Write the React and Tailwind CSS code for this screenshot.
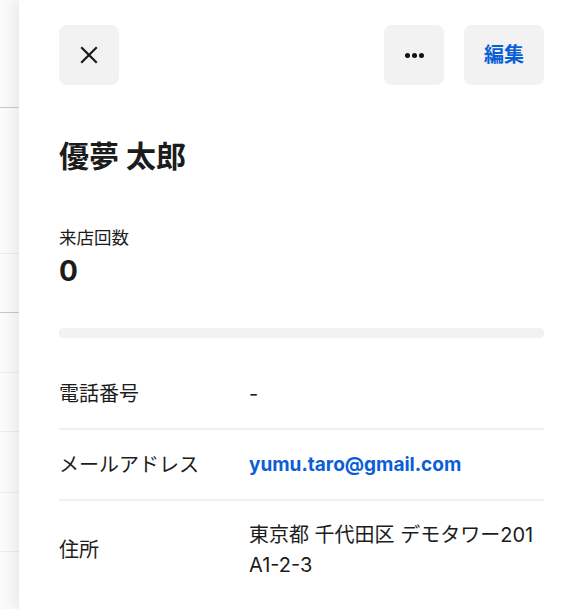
const FONT = { fontFamily: 'Inter, "Noto Sans CJK JP", sans-serif' };

// rows of the page behind the panel (only a sliver shows)
const BG_ROWS = [
  { h: 108, line: 'border-[#c9c9c9]' },
  { h: 146, line: 'border-[#ececec]' },
  { h: 59, line: 'border-[#c9c9c9]' },
  { h: 60, line: 'border-[#ececec]' },
  { h: 59, line: 'border-[#ececec]' },
  { h: 61, line: 'border-[#ececec]' },
  { h: 59, line: 'border-[#ececec]' },
];

function InfoRow({ label, children, last }) {
  return (
    <div className={`flex items-center py-[19px] ${last ? '' : 'border-b-2 border-[#f0f0f0]'}`}>
      <div className="w-[190px] shrink-0 text-[20px] leading-[30px] text-[#1c1c1c]">{label}</div>
      <div className="flex-1 text-[20px] leading-[30px] text-[#1c1c1c]">{children}</div>
    </div>
  );
}

export default function App() {
  return (
    <div className="flex w-[576px] h-[609px] overflow-hidden bg-white" style={FONT}>
      <div className="w-[19px] shrink-0 flex flex-col bg-[#fbfbfb]">
        {BG_ROWS.map((r, i) => (
          <div key={i} className={`shrink-0 border-b ${r.line}`} style={{ height: r.h }} />
        ))}
      </div>

      <div className="relative z-10 flex-1 bg-white pl-10 pr-8 pt-[25px] shadow-[-6px_0_14px_rgba(0,0,0,0.07)]">
        {/* Header buttons */}
        <div className="flex items-center justify-between">
          <button className="w-[60px] h-[60px] rounded-lg bg-[#f2f2f2] flex items-center justify-center">
            <svg width="18" height="18" viewBox="0 0 18 18" fill="none" stroke="#1a1a1a" strokeWidth="2.2" strokeLinecap="square">
              <path d="M2 2L16 16M16 2L2 16" />
            </svg>
          </button>
          <div className="flex items-center gap-5">
            <button className="w-[60px] h-[60px] rounded-lg bg-[#f2f2f2] flex items-center justify-center gap-[2px]">
              <span className="w-[5px] h-[5px] rounded-full bg-[#111]" />
              <span className="w-[5px] h-[5px] rounded-full bg-[#111]" />
              <span className="w-[5px] h-[5px] rounded-full bg-[#111]" />
            </button>
            <button className="w-[80px] h-[60px] rounded-lg bg-[#f2f2f2] flex items-center justify-center text-[20px] font-bold text-[#0b5fd6]">
              編集
            </button>
          </div>
        </div>

        <h1 className="mt-[51px] text-[30px] leading-[40px] font-bold text-[#1c1c1c]">優夢 太郎</h1>

        <div className="mt-[49px] text-[17.5px] leading-[26px] text-[#1c1c1c]">来店回数</div>
        <div className="mt-[3px] text-[28px] leading-[34px] font-bold text-[#1c1c1c]">0</div>

        <div className="mt-[40px] h-[10px] rounded bg-[#f2f2f2]" />

        <div className="mt-[22px]">
          <InfoRow label="電話番号">-</InfoRow>
          <InfoRow label="メールアドレス">
            <span className="text-[19px] font-bold text-[#0b5fd6]">yumu.taro@gmail.com</span>
          </InfoRow>
          <InfoRow label="住所" last>
            <div>東京都 千代田区 デモタワー201</div>
            <div>A1-2-3</div>
          </InfoRow>
        </div>
      </div>
    </div>
  );
}
